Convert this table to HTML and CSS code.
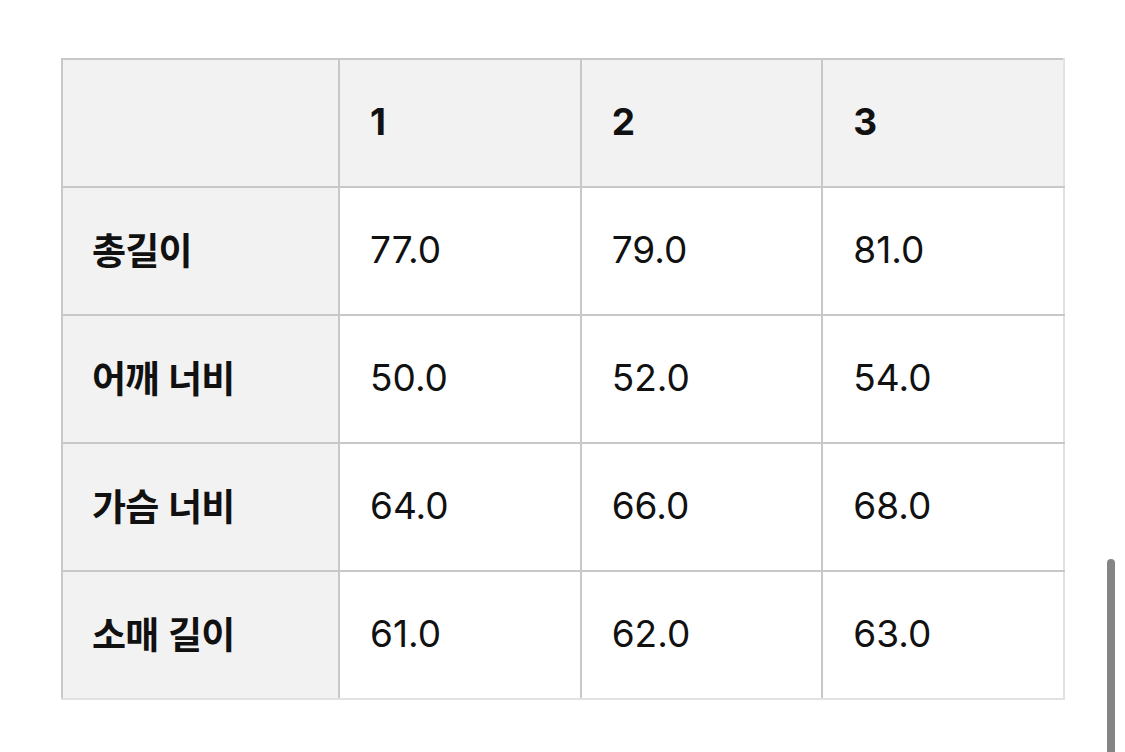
FILE: index.html
```html
<!DOCTYPE html>
<html lang="ko">
<head>
<meta charset="utf-8">
<link rel="stylesheet" href="styles.css">
</head>
<body>
<div class="page">
  <table class="size-table">
    <thead>
      <tr>
        <th class="label"></th>
        <th>1</th>
        <th>2</th>
        <th>3</th>
      </tr>
    </thead>
    <tbody>
      <tr><th class="label">총길이</th><td>77.0</td><td>79.0</td><td>81.0</td></tr>
      <tr><th class="label">어깨 너비</th><td>50.0</td><td>52.0</td><td>54.0</td></tr>
      <tr><th class="label">가슴 너비</th><td>64.0</td><td>66.0</td><td>68.0</td></tr>
      <tr><th class="label">소매 길이</th><td>61.0</td><td>62.0</td><td>63.0</td></tr>
    </tbody>
  </table>
</div>
<div class="scroll-indicator"></div>
</body>
</html>
```
FILE: styles.css
```css
html, body {
  margin: 0;
  padding: 0;
  background: #ffffff;
  overflow: hidden;
}
body {
  width: 1125px;
  height: 752px;
  font-family: "Inter", "Noto Sans CJK KR", sans-serif;
  color: #111111;
}
.page {
  padding: 58px 0 0 61px;
}
.size-table {
  border-collapse: collapse;
  table-layout: fixed;
  width: 1004px;
}
.size-table th,
.size-table td {
  height: 128px;
  padding: 0 0 4px 30px;
  border: 2px solid #c8c8c8;
  text-align: left;
  vertical-align: middle;
  font-size: 37px;
  line-height: 1;
  box-sizing: border-box;
}
.size-table th:first-child { width: 277px; }
.size-table td { font-weight: 400; background: #ffffff; }
.size-table th { font-weight: 700; }
.size-table thead th { background: #f2f2f2; }
.size-table th.label {
  background: #f2f2f2;
  font-family: "Noto Sans CJK KR", sans-serif;
  font-size: 37px;
  letter-spacing: -0.8px;
  padding-left: 29px;
}
.size-table tr > *:last-child { border-right-color: #e2e2e2; }
.size-table tbody tr:last-child > * { border-bottom-color: #e2e2e2; }
.scroll-indicator {
  position: absolute;
  left: 1107px;
  top: 559px;
  width: 8px;
  height: 210px;
  border-radius: 4px;
  background: #858585;
}
```
